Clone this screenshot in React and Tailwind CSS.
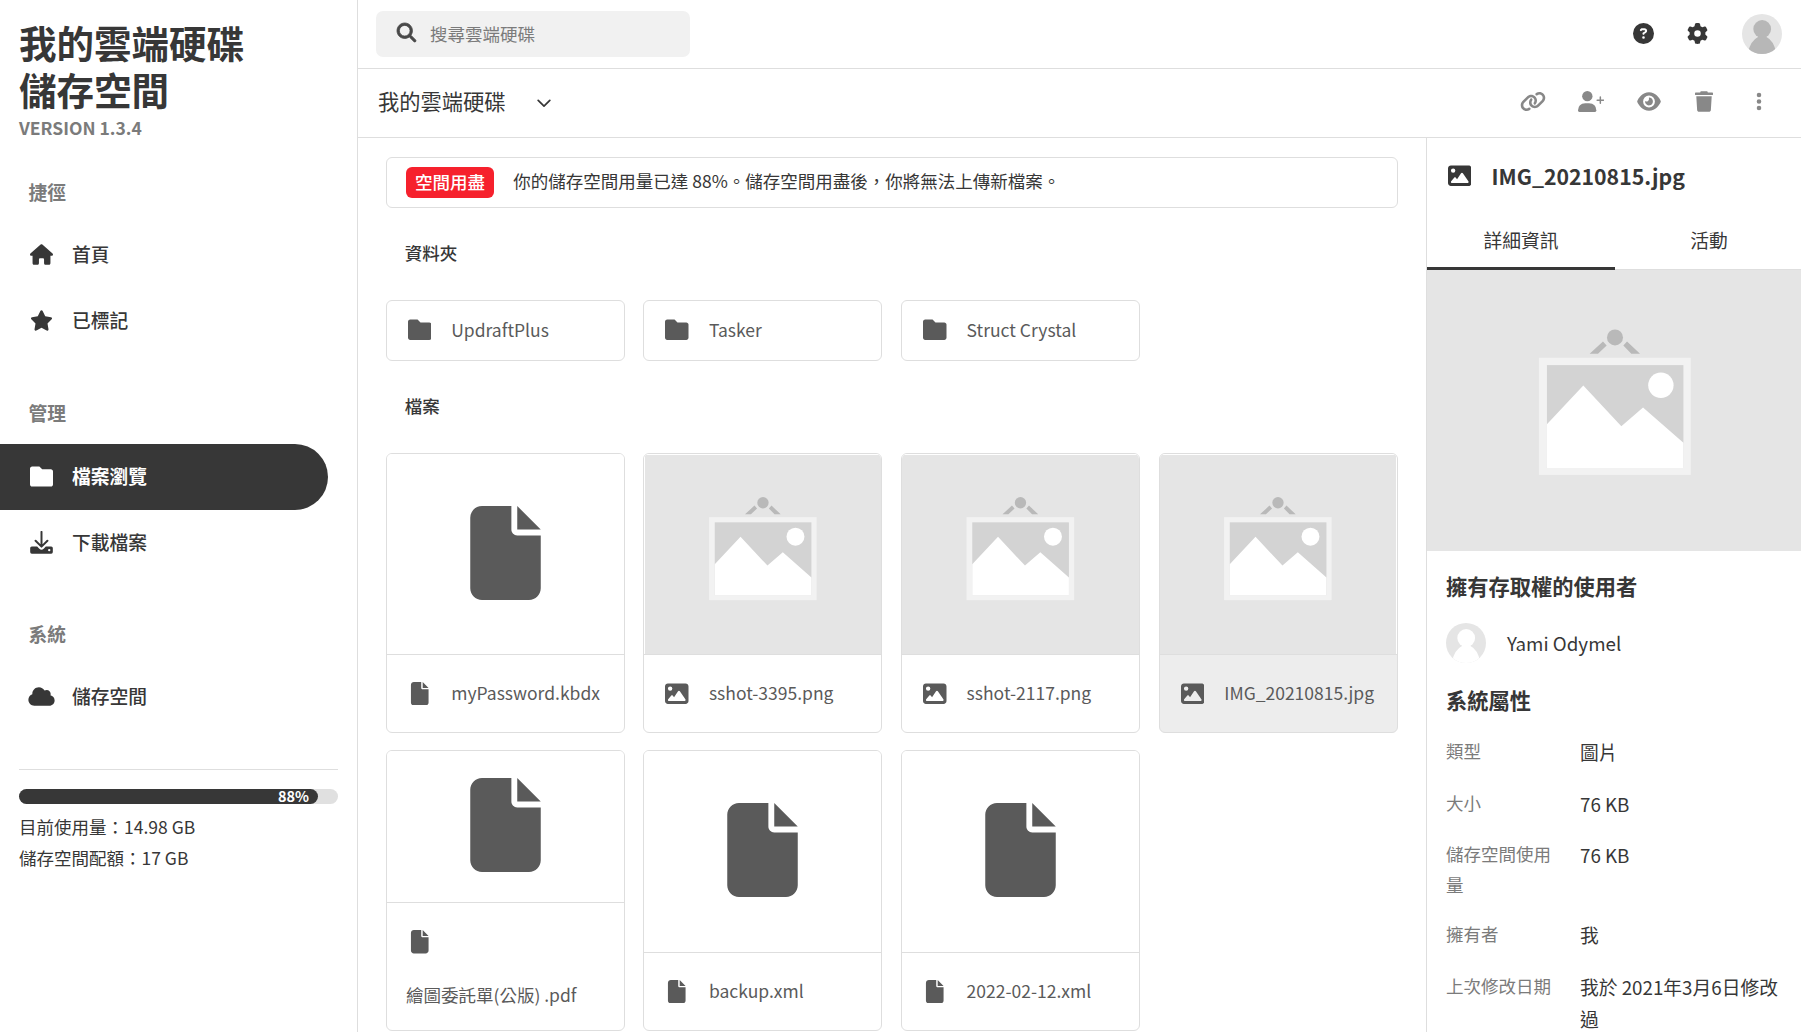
import React from "react";
import {
  FaHouse,
  FaStar,
  FaCloud,
  FaMagnifyingGlass,
  FaCircleQuestion,
  FaGear,
  FaLink,
  FaEye,
  FaEllipsisVertical,
  FaImage,
  FaFile,
} from "react-icons/fa6";

function FolderIcon({ className }) {
  return (
    <svg viewBox="0 0 512 512" className={className} fill="currentColor">
      <path d="M512 144v288c0 26.5-21.5 48-48 48H48c-26.500 0-48-21.500-48-48V80C0 53.500 21.500 32 48 32h160l64 64h192C490.500 96 512 117.500 512 144z" />
    </svg>
  );
}

function DownloadIcon({ className }) {
  return (
    <svg viewBox="0 0 64 64" className={className} fill="currentColor">
      <path
        d="M32 2.500V41M15.500 27L32 43.500L48.500 27"
        fill="none"
        stroke="currentColor"
        strokeWidth="5.500"
        strokeLinecap="round"
        strokeLinejoin="round"
      />
      <path
        fillRule="evenodd"
        d="M5 43H20L26 49.500Q32 54.500 38 49.500L44 43H59Q63.500 43 63.500 47.500V58.500Q63.500 63 59 63H5Q0.500 63 0.500 58.500V47.500Q0.500 43 5 43ZM53.500 49.800a3.300 3.300 0 1 0 0 6.600a3.300 3.300 0 1 0 0-6.600Z"
      />
    </svg>
  );
}

function UserPlusIcon({ className }) {
  return (
    <svg viewBox="0 0 78 63" className={className} fill="currentColor">
      <circle cx="28" cy="15.500" r="15.500" />
      <path d="M22 36.500H33Q54.500 37.500 55 58Q55 63 51 63H4Q0 63 0 58Q0.500 37.500 22 36.500Z" />
      <path d="M67 18V37M57.500 27.500H76.500" fill="none" stroke="currentColor" strokeWidth="4.500" strokeLinecap="round" />
    </svg>
  );
}

function TrashIcon({ className }) {
  return (
    <svg viewBox="0 0 448 512" className={className} fill="currentColor">
      <path d="M53.210 467c1.562 24.840 23.020 45 47.900 45h245.800c24.880 0 46.330-20.160 47.900-45L416 128H32L53.210 467zM432 32H320l-11.580-23.160c-2.709-5.420-8.250-8.844-14.310-8.844H153.900c-6.061 0-11.600 3.424-14.310 8.844L128 32H16c-8.836 0-16 7.162-16 16V80c0 8.836 7.164 16 16 16h416c8.838 0 16-7.164 16-16V48C448 39.160 440.800 32 432 32z" />
    </svg>
  );
}

function ChevronIcon({ className }) {
  return (
    <svg viewBox="0 0 14 9" className={className} fill="none" stroke="currentColor" strokeWidth="1.700" strokeLinecap="round" strokeLinejoin="round">
      <path d="M1.200 1.400L7 7.200L12.800 1.400" />
    </svg>
  );
}

// Framed landscape hanging from a nail, shown when a picture has no preview.
function Placeholder({ className }) {
  return (
    <svg viewBox="21 30 1128 842" preserveAspectRatio="xMidYMid slice" className={className}>
      <rect x="0" y="0" width="1200" height="900" fill="#e5e5e5" />
      <circle cx="585" cy="232" r="24" fill="#b9b9b9" />
      <path d="M509 281L549 244L560 256L534 281ZM660 281L621 244L610 256L634 281Z" fill="#b9b9b9" />
      <rect x="357" y="293" width="455" height="351" fill="#f2f2f2" />
      <rect x="381" y="315" width="409" height="308" fill="#d3d3d3" />
      <path d="M381 492L490 376L604 498L669 442L790 548V623H381Z" fill="#fff" />
      <circle cx="722.500" cy="375.500" r="38" fill="#fff" />
    </svg>
  );
}

function Avatar({ figure }) {
  return (
    <svg viewBox="0 0 40 40" className="size-10 shrink-0 rounded-full bg-[#e5e5e5]">
      <circle cx="20.200" cy="15" r="8.900" fill={figure} />
      <path d="M16 21H24.500V23Q31.500 26.500 34 38V41H6V38Q9 26.500 16 23Z" fill={figure} />
    </svg>
  );
}

function SectionLabel({ children, className }) {
  return (
    <div className={`flex h-[34px] items-center pl-[28.5px] text-[18.75px] font-bold text-[#7b7b7b] ${className}`}>
      {children}
    </div>
  );
}

function MenuItem({ icon: Icon, label, active, wide }) {
  return (
    <a
      className={`flex h-[66px] w-[328px] items-center rounded-r-full text-[18.75px] ${
        active ? "bg-[#373737] font-bold text-white" : "font-medium"
      }`}
    >
      <span className="mb-px ml-[27.5px] flex w-[27px] justify-center">
        <Icon className={wide ? "h-[21px] w-[27px]" : "size-[23px]"} />
      </span>
      <span className="mb-[2px] ml-[17.5px]">{label}</span>
    </a>
  );
}

function Sidebar() {
  return (
    <aside className="flex w-[358px] shrink-0 flex-col border-r border-[#dedede]">
      <h1 className="mt-[18px] h-[96px] pl-[19px] text-[37.5px] leading-[47px] font-bold">
        我的雲端硬碟
        <br />
        儲存空間
      </h1>
      <div className="h-[28px] pl-[19px] text-[17.5px] leading-[28px] font-bold text-[#7b7b7b]">VERSION 1.3.4</div>
      <SectionLabel className="mt-[34px] pb-[2px]">捷徑</SectionLabel>
      <nav className="mt-[12px]">
        <MenuItem icon={FaHouse} label="首頁" />
        <MenuItem icon={FaStar} label="已標記" />
      </nav>
      <SectionLabel className="mt-[42px]">管理</SectionLabel>
      <nav className="mt-[14px]">
        <MenuItem icon={FolderIcon} label="檔案瀏覽" active />
        <MenuItem icon={DownloadIcon} label="下載檔案" />
      </nav>
      <SectionLabel className="mt-[42px] pb-[2px]">系統</SectionLabel>
      <nav className="mt-[12px]">
        <MenuItem icon={FaCloud} label="儲存空間" wide />
      </nav>
      <div className="mx-[19px] mt-[39px] border-t border-[#dedede] pt-[19px] text-[17.5px] leading-[31px]">
        <div className="h-[15px] rounded-full bg-[#e0e0e0]">
          <div className="flex h-full w-[299px] items-center justify-end rounded-full bg-[#373737] pr-[9px] pb-[2px] text-[14.5px] leading-[15px] font-bold text-white">
            88%
          </div>
        </div>
        <div className="mt-[7px]">目前使用量：14.98 GB</div>
        <div>儲存空間配額：17 GB</div>
      </div>
    </aside>
  );
}

function TopBar() {
  return (
    <header className="flex h-[69px] shrink-0 items-center border-b border-[#dedede] pr-[19px] pl-[18px]">
      <div className="flex h-[46px] w-[314px] items-center rounded-[7px] bg-[#f1f1f1] pl-[20.5px]">
        <FaMagnifyingGlass className="mb-[3px] size-[19px] overflow-visible text-[#484848]" strokeWidth="22" stroke="currentColor" />
        <span className="ml-[14.5px] text-[17.5px] text-[#7b7b7b]">搜尋雲端硬碟</span>
      </div>
      <div className="ml-auto flex items-center">
        <FaCircleQuestion className="mb-[2px] size-[21px]" />
        <FaGear className="mb-[2px] ml-[33px] size-[21px]" />
        <span className="ml-[34.25px] flex">
          <Avatar figure="#b7b7b7" />
        </span>
      </div>
    </header>
  );
}

function Toolbar() {
  return (
    <div className="flex h-[69px] shrink-0 items-center border-b border-[#dedede] pr-[39.5px] pl-[20px]">
      <span className="mb-[4px] text-[21.25px]">我的雲端硬碟</span>
      <ChevronIcon className="ml-[31.5px] h-[9px] w-[14px]" />
      <div className="mb-[3px] ml-auto flex items-center text-[#888]">
        <FaLink className="h-[21px] w-[26px]" />
        <UserPlusIcon className="ml-[32.5px] h-[21px] w-[26px]" />
        <FaEye className="ml-[33px] h-[21px] w-[24px]" />
        <TrashIcon className="ml-[34px] h-[21px] w-[18px]" />
        <FaEllipsisVertical className="ml-[42.5px] h-[21px] w-[6px]" />
      </div>
    </div>
  );
}

const folders = ["UpdraftPlus", "Tasker", "Struct Crystal"];

const files = [
  { name: "myPassword.kbdx" },
  { name: "sshot-3395.png", image: true, inset: "pl-px" },
  { name: "sshot-2117.png", image: true },
  { name: "IMG_20210815.jpg", image: true, inset: "pr-px", selected: true },
  { name: "繪圖委託單(公版) .pdf", stacked: true },
  { name: "backup.xml" },
  { name: "2022-02-12.xml" },
];

function FileCard({ file }) {
  const Icon = file.image ? FaImage : FaFile;
  return (
    <div
      className={`flex flex-col overflow-hidden rounded-[6px] border border-[#dedede] ${
        file.selected ? "bg-[#ededed]" : "bg-white"
      }`}
    >
      <div
        className={`flex min-h-0 flex-1 items-center justify-center border-b border-[#dedede] bg-white ${
          file.image ? "pt-px" : "pb-[3px]"
        } ${file.inset || ""}`}
      >
        {file.image ? <Placeholder className="size-full" /> : <FaFile className="h-[94px] w-[71px]" />}
      </div>
      {file.stacked ? (
        <div className="flex h-[127px] shrink-0 flex-col pl-[19.3px]">
          <span className="mt-[27px] flex w-[27px] justify-center">
            <Icon className="size-[23.500px]" />
          </span>
          <span className="mt-[25px] leading-[31px]">{file.name}</span>
        </div>
      ) : (
        <div className="flex h-[77px] shrink-0 items-center pl-[19.3px]">
          <span className="flex w-[27px] shrink-0 justify-center">
            <Icon className="size-[23.500px]" />
          </span>
          <span className="mb-px ml-[18.25px] whitespace-nowrap">{file.name}</span>
        </div>
      )}
    </div>
  );
}

function Browser() {
  return (
    <main className="min-w-0 flex-1 overflow-hidden pt-[19px] pr-[28.3px] pl-[27.7px]">
      <div className="flex h-[51px] items-center rounded-[6px] border border-[#dedede] pl-[19.3px] text-[17.5px]">
        <span className="flex h-[31px] w-[88px] items-center justify-center rounded-[6px] bg-[#f6212d] pb-[1px] font-medium text-white">
          空間用盡
        </span>
        <span className="mb-[3px] ml-[19.3px]">你的儲存空間用量已達 88%。儲存空間用盡後，你將無法上傳新檔案。</span>
      </div>
      <h2 className="mt-[29px] pl-[19px] text-[17.5px] leading-[31px] font-medium">資料夾</h2>
      <div className="mt-[32px] grid grid-cols-4 gap-[18.750px] text-[17.5px] text-[#5a5a5a]">
        {folders.map((name) => (
          <div key={name} className="flex h-[61px] items-center rounded-[6px] border border-[#dedede] pl-[19.3px]">
            <span className="mb-px flex w-[27px] justify-center">
              <FolderIcon className="size-[23.500px]" />
            </span>
            <span className="mb-px ml-[18.25px]">{name}</span>
          </div>
        ))}
      </div>
      <h2 className="mt-[29px] pl-[19px] text-[17.5px] leading-[31px] font-medium">檔案</h2>
      <div className="mt-[32px] grid grid-cols-4 grid-rows-[280px_281px] gap-x-[18.750px] gap-y-[17px] text-[17.5px] text-[#5a5a5a]">
        {files.map((file) => (
          <FileCard key={file.name} file={file} />
        ))}
      </div>
    </main>
  );
}

const properties = [
  ["類型", "圖片"],
  ["大小", "76 KB"],
  ["儲存空間使用量", "76 KB"],
  ["擁有者", "我"],
  ["上次修改日期", "我於 2021年3月6日修改過"],
];

function Details() {
  return (
    <aside className="flex w-[375px] shrink-0 flex-col overflow-hidden border-l border-[#dedede]">
      <div className="flex h-[77px] shrink-0 items-center pl-[20.5px]">
        <FaImage className="mb-px size-[23.500px]" />
        <span className="mb-[2px] ml-[20.5px] text-[21.25px] font-bold">IMG_20210815.jpg</span>
      </div>
      <div className="flex h-[55px] shrink-0 border-b border-[#dedede] text-[18.75px]">
        <div className="-mb-px flex w-[188px] items-center justify-center border-b-[3px] border-[#373737] pb-[2px]">
          詳細資訊
        </div>
        <div className="flex flex-1 items-center justify-center pb-[4px] pl-[2px]">活動</div>
      </div>
      <div className="-mt-px h-[282px] w-[376px] shrink-0 pt-px">
        <Placeholder className="size-full" />
      </div>
      <div className="px-[19px]">
        <h3 className="mt-[16px] text-[21.25px] leading-[38px] font-bold">擁有存取權的使用者</h3>
        <div className="mt-[18px] flex items-center">
          <Avatar figure="#fff" />
          <span className="ml-[21px] text-[18.75px]">Yami Odymel</span>
        </div>
        <h3 className="mt-[18px] text-[21.25px] leading-[38px] font-bold">系統屬性</h3>
        <dl className="mt-[17px] flex flex-col gap-[18.75px]">
          {properties.map(([label, value]) => (
            <div key={label} className="flex items-start">
              <dt className="w-[115px] shrink-0 text-[17.5px] leading-[30.6px] text-[#7b7b7b]">{label}</dt>
              <dd className="ml-[19px] text-[18.75px] leading-[32.8px]">{value}</dd>
            </div>
          ))}
        </dl>
      </div>
    </aside>
  );
}

export default function App() {
  return (
    <div lang="zh-Hant" className="flex h-[1032px] w-[1801px] overflow-hidden bg-white font-['Noto_Sans_CJK_TC',sans-serif] text-[#373737]">
      <Sidebar />
      <div className="flex min-w-0 flex-1 flex-col">
        <TopBar />
        <Toolbar />
        <div className="flex min-h-0 flex-1">
          <Browser />
          <Details />
        </div>
      </div>
    </div>
  );
}
